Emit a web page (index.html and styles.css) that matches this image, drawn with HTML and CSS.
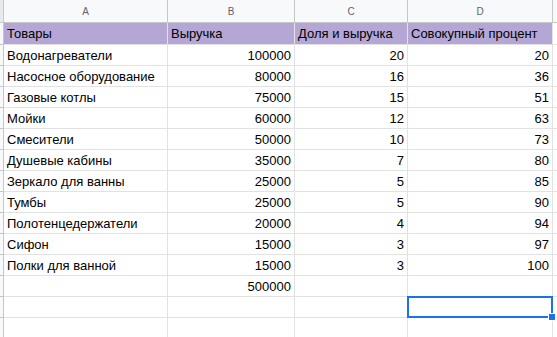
FILE: index.html
```html
<!DOCTYPE html>
<html>
    <head>
        <title>Товары</title>
        <link rel="stylesheet" href="styles.css">
    </head>
    <body>
        <div class="sheet">
            <div class="colhead corner"></div>
            <div class="colhead">A</div>
            <div class="colhead">B</div>
            <div class="colhead">C</div>
            <div class="colhead">D</div>
            <div class="colhead last"></div>

            <div class="rowhead"></div>
            <div class="cell title">Товары</div>
            <div class="cell title">Выручка</div>
            <div class="cell title">Доля и выручка</div>
            <div class="cell title">Совокупный процент</div>
            <div class="cell"></div>

            <div class="rowhead"></div><div class="cell">Водонагреватели</div><div class="cell num">100000</div><div class="cell num">20</div><div class="cell num">20</div><div class="cell"></div>
            <div class="rowhead"></div><div class="cell">Насосное оборудование</div><div class="cell num">80000</div><div class="cell num">16</div><div class="cell num">36</div><div class="cell"></div>
            <div class="rowhead"></div><div class="cell">Газовые котлы</div><div class="cell num">75000</div><div class="cell num">15</div><div class="cell num">51</div><div class="cell"></div>
            <div class="rowhead"></div><div class="cell">Мойки</div><div class="cell num">60000</div><div class="cell num">12</div><div class="cell num">63</div><div class="cell"></div>
            <div class="rowhead"></div><div class="cell">Смесители</div><div class="cell num">50000</div><div class="cell num">10</div><div class="cell num">73</div><div class="cell"></div>
            <div class="rowhead"></div><div class="cell">Душевые кабины</div><div class="cell num">35000</div><div class="cell num">7</div><div class="cell num">80</div><div class="cell"></div>
            <div class="rowhead"></div><div class="cell">Зеркало для ванны</div><div class="cell num">25000</div><div class="cell num">5</div><div class="cell num">85</div><div class="cell"></div>
            <div class="rowhead"></div><div class="cell">Тумбы</div><div class="cell num">25000</div><div class="cell num">5</div><div class="cell num">90</div><div class="cell"></div>
            <div class="rowhead"></div><div class="cell">Полотенцедержатели</div><div class="cell num">20000</div><div class="cell num">4</div><div class="cell num">94</div><div class="cell"></div>
            <div class="rowhead"></div><div class="cell">Сифон</div><div class="cell num">15000</div><div class="cell num">3</div><div class="cell num">97</div><div class="cell"></div>
            <div class="rowhead"></div><div class="cell">Полки для ванной</div><div class="cell num">15000</div><div class="cell num">3</div><div class="cell num">100</div><div class="cell"></div>
            <div class="rowhead"></div><div class="cell"></div><div class="cell num">500000</div><div class="cell"></div><div class="cell"></div><div class="cell"></div>
            <div class="rowhead"></div><div class="cell"></div><div class="cell"></div><div class="cell"></div><div class="cell selected"></div><div class="cell"></div>
            <div class="rowhead"></div><div class="cell"></div><div class="cell"></div><div class="cell"></div><div class="cell"></div><div class="cell"></div>
        </div>
    </body>
</html>
```

FILE: styles.css
```css
body{
    margin: 0;
    background-color: white;
    font-family: "Liberation Sans", Arial, sans-serif;
    overflow: hidden;
}

.sheet{
    display: grid;
    grid-template-columns: 4px 164px 127px 113px 145px 1fr;
    grid-template-rows: 23px 22px;
    grid-auto-rows: 21px;
}

.sheet > div{
    box-sizing: border-box;
    border-right: 1px solid #e2e2e3;
    border-bottom: 1px solid #e2e2e3;
}

.colhead{
    background-color: #f8f9fa;
    color: #5f6368;
    font-size: 10px;
    display: flex;
    justify-content: center;
    align-items: center;
    border-color: #c7c7c7 !important;
}

.colhead.corner{
    background-color: #e8eaed;
}

.rowhead{
    background-color: #f8f9fa;
    border-right-color: #c7c7c7 !important;
    border-bottom-color: #c7c7c7 !important;
}

.cell{
    font-size: 13px;
    color: #000;
    padding: 0 3px;
    display: flex;
    align-items: center;
    white-space: nowrap;
    overflow: hidden;
}

.cell.num{
    justify-content: flex-end;
}

.cell.title{
    background-color: #b4a7d6;
}

.cell.selected{
    position: relative;
    border: 2px solid #1a73e8 !important;
    margin: -1px 0 0 -1px;
    overflow: visible;
}

/* drag handle in the corner of the active cell */
.cell.selected::after{
    content: "";
    position: absolute;
    right: -5px;
    bottom: -5px;
    width: 6px;
    height: 6px;
    background-color: #1a73e8;
    border: 1px solid white;
}
```
